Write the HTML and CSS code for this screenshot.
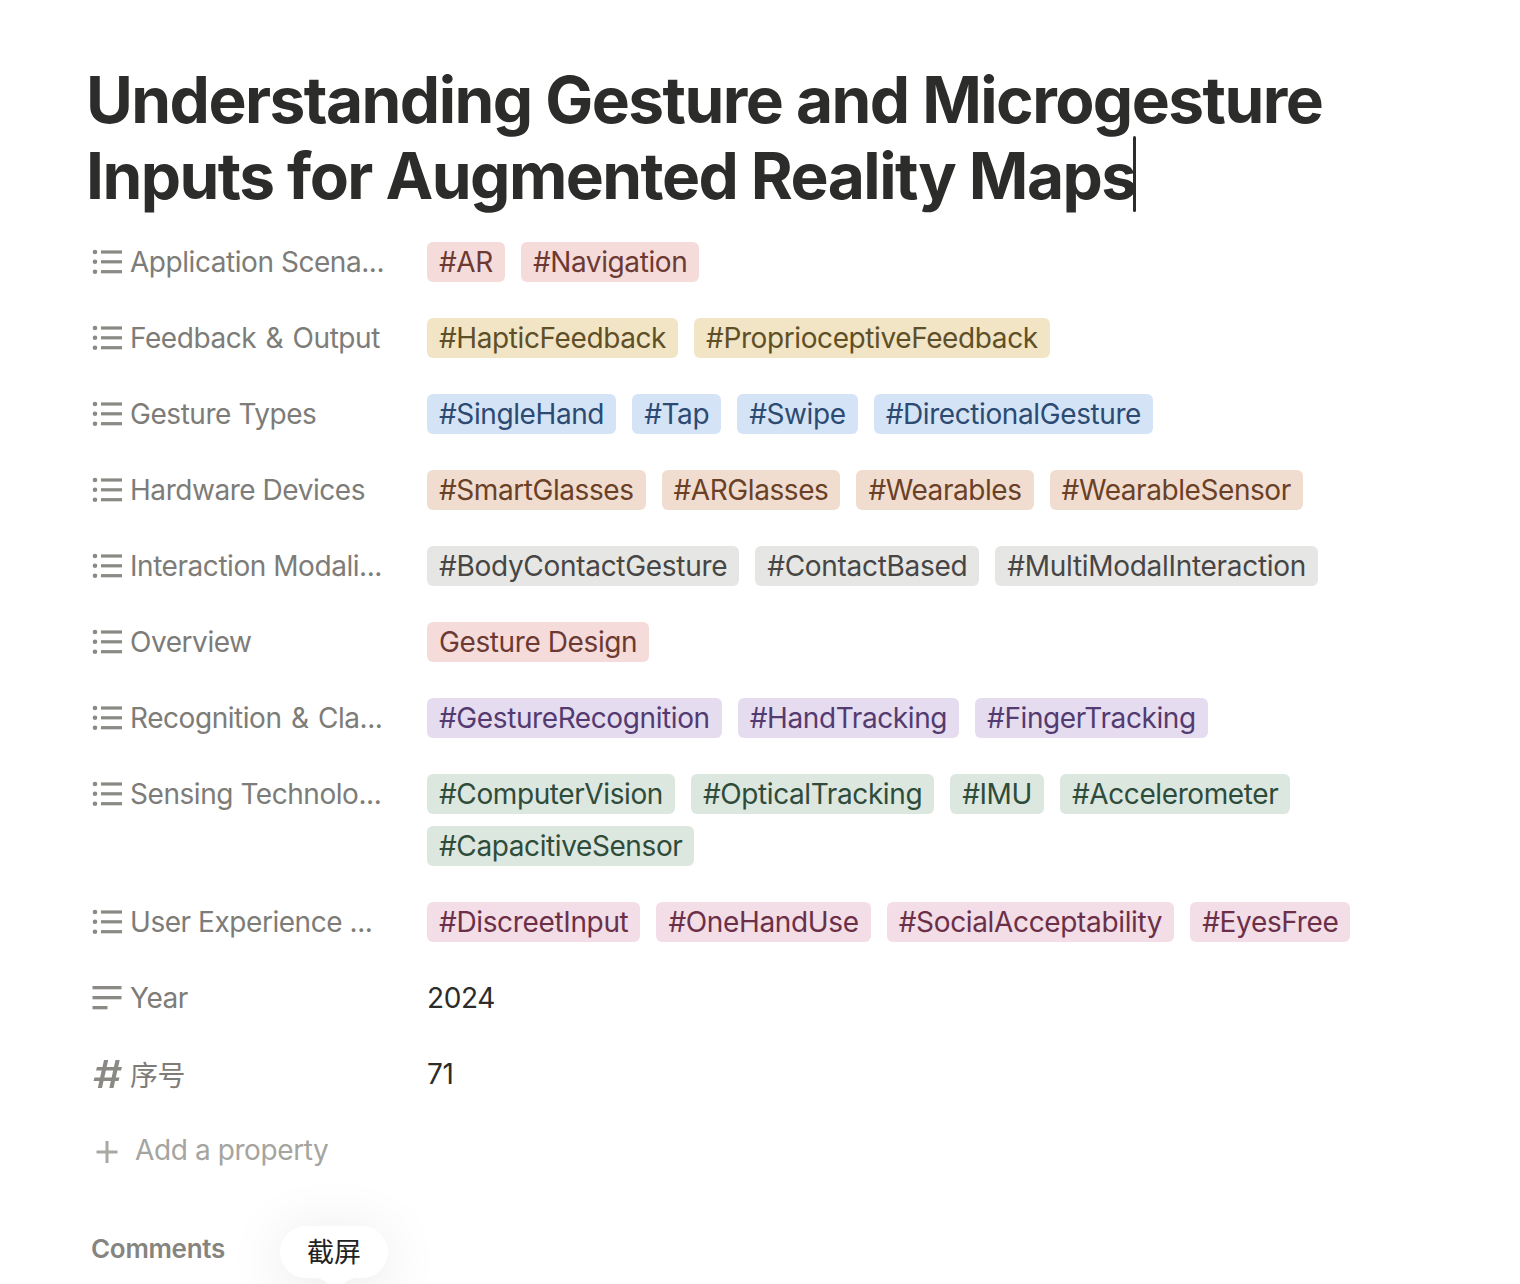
FILE: index.html
```html
<!DOCTYPE html>
<html lang="en">
<head>
<meta charset="utf-8">
<title>Understanding Gesture and Microgesture Inputs for Augmented Reality Maps</title>
<link rel="stylesheet" href="styles.css">
</head>
<body>
<svg class="defs" width="0" height="0" aria-hidden="true">
  <symbol id="i-list" viewBox="0 0 30 30">
    <circle cx="3" cy="5" r="2.3"/><circle cx="3" cy="14.8" r="2.3"/><circle cx="3" cy="24.7" r="2.3"/>
    <rect x="9" y="3.4" width="21" height="3.2"/><rect x="9" y="13.200" width="21" height="3.2"/><rect x="9" y="23.100" width="21" height="3.2"/>
  </symbol>
  <symbol id="i-text" viewBox="0 0 30 30">
    <rect x="0.500" y="3" width="29" height="3.3"/><rect x="0.500" y="13" width="29" height="3.3"/><rect x="0.500" y="23" width="15" height="3.3"/>
  </symbol>
  <symbol id="i-num" viewBox="0 0 30 30">
    <path d="M12 1h4.200L10 29H5.800zM23.500 1h4.200L21.500 29h-4.200z"/><path d="M5 8h25l-1 3.600H4zM2.500 18.500h25l-1 3.600h-25z"/>
  </symbol>
  <symbol id="i-plus" viewBox="0 0 24 24">
    <rect x="1.500" y="10.500" width="21" height="3"/><rect x="10.500" y="1" width="3" height="22"/>
  </symbol>
</svg>
<main class="page">
  <h1 class="title">Understanding Gesture and Microgesture Inputs for Augmented Reality Maps<span class="caret"></span></h1>
  <section class="props">
    <div class="prop">
      <div class="label"><svg class="ico"><use href="#i-list"/></svg><span class="name">Application Scena...</span></div>
      <div class="tags"><span class="tag red">#AR</span><span class="tag red">#Navigation</span></div>
    </div>
    <div class="prop">
      <div class="label"><svg class="ico"><use href="#i-list"/></svg><span class="name">Feedback <span class="amp">&amp;</span> Output</span></div>
      <div class="tags"><span class="tag yellow">#HapticFeedback</span><span class="tag yellow">#ProprioceptiveFeedback</span></div>
    </div>
    <div class="prop">
      <div class="label"><svg class="ico"><use href="#i-list"/></svg><span class="name">Gesture Types</span></div>
      <div class="tags"><span class="tag blue">#SingleHand</span><span class="tag blue">#Tap</span><span class="tag blue">#Swipe</span><span class="tag blue">#DirectionalGesture</span></div>
    </div>
    <div class="prop">
      <div class="label"><svg class="ico"><use href="#i-list"/></svg><span class="name">Hardware Devices</span></div>
      <div class="tags"><span class="tag brown">#SmartGlasses</span><span class="tag brown">#ARGlasses</span><span class="tag brown">#Wearables</span><span class="tag brown">#WearableSensor</span></div>
    </div>
    <div class="prop">
      <div class="label"><svg class="ico"><use href="#i-list"/></svg><span class="name">Interaction Modali...</span></div>
      <div class="tags"><span class="tag gray">#BodyContactGesture</span><span class="tag gray">#ContactBased</span><span class="tag gray">#MultiModalInteraction</span></div>
    </div>
    <div class="prop">
      <div class="label"><svg class="ico"><use href="#i-list"/></svg><span class="name">Overview</span></div>
      <div class="tags"><span class="tag red">Gesture Design</span></div>
    </div>
    <div class="prop">
      <div class="label"><svg class="ico"><use href="#i-list"/></svg><span class="name">Recognition <span class="amp">&amp;</span> Cla...</span></div>
      <div class="tags"><span class="tag purple">#GestureRecognition</span><span class="tag purple">#HandTracking</span><span class="tag purple">#FingerTracking</span></div>
    </div>
    <div class="prop">
      <div class="label"><svg class="ico"><use href="#i-list"/></svg><span class="name">Sensing Technolo...</span></div>
      <div class="tags"><span class="tag green">#ComputerVision</span><span class="tag green">#OpticalTracking</span><span class="tag green">#IMU</span><span class="tag green">#Accelerometer</span><span class="tag green">#CapacitiveSensor</span></div>
    </div>
    <div class="prop">
      <div class="label"><svg class="ico"><use href="#i-list"/></svg><span class="name">User Experience ...</span></div>
      <div class="tags"><span class="tag pink">#DiscreetInput</span><span class="tag pink">#OneHandUse</span><span class="tag pink">#SocialAcceptability</span><span class="tag pink">#EyesFree</span></div>
    </div>
    <div class="prop">
      <div class="label"><svg class="ico"><use href="#i-text"/></svg><span class="name">Year</span></div>
      <div class="value">2024</div>
    </div>
    <div class="prop">
      <div class="label"><svg class="ico"><use href="#i-num"/></svg><span class="name">序号</span></div>
      <div class="value">71</div>
    </div>
    <div class="add"><svg class="plus"><use href="#i-plus"/></svg><span>Add a property</span></div>
  </section>
  <h2 class="comments">Comments</h2>
</main>
<div class="bubble">截屏</div>
</body>
</html>
```
FILE: styles.css
```css
html, body {
  margin: 0;
  height: 1284px;
  overflow: hidden;
  background: #fff;
}
body {
  position: relative;
  font-family: Inter, "Noto Sans CJK SC", sans-serif;
  color: #2c2c2b;
}
.defs { position: absolute; }
.page {
  padding: 62px 100px 0 87px;
}
.title {
  margin: 0 0 0 -1px;
  font-size: 64px;
  line-height: 76px;
  font-weight: 700;
  letter-spacing: -1.55px;
  color: #2c2c2b;
}
.caret {
  display: inline-block;
  width: 3px;
  height: 76px;
  margin: -2px -3px 0 -3px;
  background: #2c2c2b;
  border-radius: 2px;
  vertical-align: top;
}
.props {
  margin-top: 28px;
  display: flex;
  flex-direction: column;
  gap: 36px;
}
.prop {
  display: flex;
  align-items: flex-start;
}
.label {
  width: 340px;
  flex: none;
  height: 40px;
  display: flex;
  align-items: center;
  color: #7d7c78;
  font-size: 28px;
  letter-spacing: -0.45px;
  padding-left: 5px;
  box-sizing: border-box;
}
.ico {
  width: 30px;
  height: 30px;
  fill: #8a8984;
  flex: none;
  margin-right: 8px;
}
.name { white-space: nowrap; }
.amp { padding: 0 2px; }
.tags {
  display: flex;
  flex-wrap: wrap;
  gap: 12px 16px;
  flex: 1;
}
.tag {
  height: 40px;
  line-height: 41px;
  padding: 0 12px;
  border-radius: 6px;
  font-size: 28px;
  letter-spacing: -0.4px;
  white-space: nowrap;
}
.value {
  height: 40px;
  line-height: 41px;
  font-size: 28px;
  letter-spacing: -0.4px;
  color: #2c2c2b;
}
.red { background: #f5dcda; color: #6c3a33; }
.yellow { background: #f1e5c6; color: #5f4f27; }
.blue { background: #d4e4f6; color: #2c4a72; }
.brown { background: #f1ddd0; color: #6a4126; letter-spacing: -0.43px; }
.gray { background: #e6e6e4; color: #474645; letter-spacing: -0.3px; }
.purple { background: #e6dcf0; color: #533b70; }
.green { background: #dce7df; color: #2f4c3a; }
.pink { background: #f3dde6; color: #6b3048; letter-spacing: -0.35px; }
.add {
  height: 40px;
  display: flex;
  align-items: center;
  color: #a5a49e;
  font-size: 28px;
  letter-spacing: -0.4px;
  padding-left: 8px;
}
.plus {
  width: 24px;
  height: 24px;
  fill: #a9a8a1;
  margin: 4px 16px 0 0;
  flex: none;
}
.comments {
  margin: 62px 0 0 4px;
  font-size: 26px;
  line-height: 34px;
  font-weight: 600;
  letter-spacing: -0.3px;
  color: #85847f;
}
.bubble {
  position: absolute;
  left: 280px;
  top: 1226px;
  width: 108px;
  height: 52px;
  border-radius: 26px;
  background: #fff;
  font-size: 27px;
  line-height: 54px;
  text-align: center;
  color: #222;
  box-shadow: 0 8px 60px rgba(0, 0, 0, 0.1);
}
.bubble::after {
  content: "";
  position: absolute;
  left: 32px;
  top: 51px;
  width: 48px;
  height: 14px;
  background: #fff;
  clip-path: path("M0 0H48C40 1 34 4 31 8L26 13H22L17 8C14 4 8 1 0 0Z");
}
```
